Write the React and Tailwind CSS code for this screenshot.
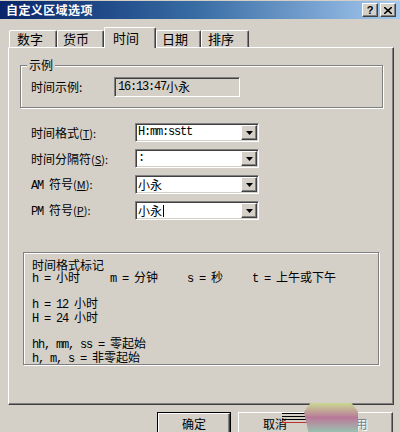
import React from 'react';

const raised =
  'border border-t-white border-l-white border-r-[#404040] border-b-[#404040] shadow-[inset_-1px_-1px_0_#808080]';
const sunken =
  'border border-t-[#808080] border-l-[#808080] border-r-white border-b-white shadow-[inset_1px_1px_0_#404040,inset_-1px_-1px_0_#d4d0c8]';
const etched = 'border border-[#808080] shadow-[inset_1px_1px_0_#fff,1px_1px_0_#fff]';

// latin runs in a narrow mono face, CJK in Noto
function T({ children }) {
  const parts = String(children).split(/([\x20-\x7e]+)/).filter(Boolean);
  return (
    <>
      {parts.map((p, i) =>
        /^[\x20-\x7e]+$/.test(p) ? (
          <span key={i} className="font-['Liberation_Mono',monospace] tracking-[-1.2px] whitespace-pre">
            {p}
          </span>
        ) : (
          <span key={i}>{p}</span>
        )
      )}
    </>
  );
}

function Arrow() {
  return (
    <svg width="7" height="4" viewBox="0 0 7 4">
      <path d="M0 0h7L3.5 4z" fill="#000" />
    </svg>
  );
}

function Combo({ value, caret }) {
  return (
    <div className={`relative w-[124px] h-[19px] bg-white flex items-center ${sunken}`}>
      <span className="pl-[2px] leading-[15px] flex items-center">
        <T>{value}</T>
        {caret && <span className="ml-[1px] w-[1px] h-[12px] bg-black" />}
      </span>
      <div className={`ml-auto mr-[1px] w-[16px] h-[15px] bg-[#d4d0c8] flex items-center justify-center ${raised}`}>
        <Arrow />
      </div>
    </div>
  );
}

function Row({ label, keyChar, pre, value, caret }) {
  return (
    <div className="flex items-center h-[19px] pl-[22px]">
      <div className="w-[104px] leading-[14px]">
        <T>{pre}</T>
        <span className="text-[11px]">(</span>
        <span className="underline text-[11px]">{keyChar}</span>
        <span className="text-[11px]">):</span>
      </div>
      <Combo value={value} caret={caret} />
    </div>
  );
}

const tabs = [
  { t: '数字', w: 'w-[48px]', pl: 'pl-[7px]' },
  { t: '货币', w: 'w-[47px]', pl: 'pl-[5px]' },
  { t: '时间', w: 'w-[52px]', pl: 'pl-[8px]', on: true },
  { t: '日期', w: 'w-[45px]', pl: 'pl-[5px]' },
  { t: '排序', w: 'w-[48px]', pl: 'pl-[6px]' },
];

export default function App() {
  return (
    <div className="relative w-[400px] h-[432px] overflow-hidden bg-[#d4d0c8] text-black text-[12px] font-['Noto_Sans_CJK_SC',sans-serif]">
      {/* title bar */}
      <div className="mt-[1px] h-[18px] flex items-center pl-[6px] pr-[4px] bg-linear-to-r from-[#0a246a] via-[#3a6ea5] to-[#a6caf0]">
        <span className="text-white font-bold text-[12px] leading-[14px] tracking-[0.4px]">自定义区域选项</span>
        <div className="ml-auto flex gap-[2px]">
          <div className={`w-[16px] h-[14px] bg-[#d4d0c8] flex items-center justify-center text-[11px] font-bold leading-none font-['Liberation_Sans',sans-serif] ${raised}`}>?</div>
          <div className={`w-[16px] h-[14px] bg-[#d4d0c8] flex items-center justify-center ${raised}`}>
            <svg width="8" height="7" viewBox="0 0 8 7">
              <path d="M0 0L8 7M8 0L0 7" stroke="#000" strokeWidth="1.6" />
            </svg>
          </div>
        </div>
      </div>

      {/* tabs */}
      <div className="mt-[8px] h-[20px] flex items-end pl-[9px] relative z-10">
        {tabs.map((tb) =>
          tb.on ? (
            <div
              key={tb.t}
              className={`${tb.w} h-[21px] -mb-[1px] bg-[#d4d0c8] rounded-t-[2px] border-t border-l border-t-white border-l-white border-r border-r-[#404040] shadow-[inset_-1px_0_0_#808080] ${tb.pl} pt-[3px] text-[13px] leading-[14px]`}
            >
              {tb.t}
            </div>
          ) : (
            <div
              key={tb.t}
              className={`${tb.w} h-[17px] rounded-t-[2px] border-t border-l border-t-white border-l-white border-r border-r-[#404040] shadow-[inset_-1px_0_0_#808080] ${tb.pl} pt-[1px] text-[13px] leading-[14px]`}
            >
              {tb.t}
            </div>
          )
        )}
      </div>

      {/* panel */}
      <div className="ml-[8px] w-[386px] h-[358px] border border-t-white border-l-white border-r-[#404040] border-b-[#404040] shadow-[inset_-1px_-1px_0_#808080]">
        {/* 示例 group */}
        <div className={`relative mt-[17px] ml-[11px] w-[363px] h-[43px] ${etched}`}>
          <span className="absolute -top-[9px] left-[6px] px-[2px] bg-[#d4d0c8] leading-[16px]">示例</span>
          <div className="flex items-center mt-[11px] pl-[10px] h-[20px]">
            <div className="w-[83px] leading-[14px]">时间示例:</div>
            <div className={`w-[126px] h-[20px] flex items-center pl-[3px] ${sunken}`}>
              <T>16:13:47小永</T>
            </div>
          </div>
        </div>

        <div className="mt-[15px] flex flex-col gap-[7px]">
          <Row pre="时间格式" keyChar="T" value="H:mm:sstt" />
          <Row pre="时间分隔符" keyChar="S" value=":" />
          <Row pre="AM 符号" keyChar="M" value="小永" />
          <Row pre="PM 符号" keyChar="P" value="小永" caret />
        </div>

        {/* format legend */}
        <div className={`mt-[32px] ml-[14px] w-[356px] h-[113px] pl-[8px] pt-[6px] leading-[12px] ${etched}`}>
          <div>时间格式标记</div>
          <div className="flex">
            <span className="w-[78px]"><T>h = 小时</T></span>
            <span className="w-[77px]"><T>m = 分钟</T></span>
            <span className="w-[65px]"><T>s = 秒</T></span>
            <span><T>t = 上午或下午</T></span>
          </div>
          <div className="h-[12px]" />
          <div><T>h = 12 小时</T></div>
          <div><T>H = 24 小时</T></div>
          <div className="h-[12px]" />
          <div><T>hh, mm, ss = 零起始</T></div>
          <div><T>h, m, s = 非零起始</T></div>
        </div>
      </div>

      {/* buttons */}
      <div className="mt-[7px] flex pl-[157px]">
        <div className="w-[74px] h-[23px] border border-black">
          <div className={`h-full flex items-center justify-center ${raised}`}>确定</div>
        </div>
        <div className={`ml-[7px] w-[74px] h-[23px] flex items-center justify-center ${raised}`}>取消</div>
        <div className={`ml-[6px] w-[75px] h-[23px] flex items-center justify-center text-[#808080] [text-shadow:1px_1px_0_#fff] ${raised}`}>
          应用
        </div>
      </div>

      {/* screen-capture smear over the buttons */}
      <div className="absolute left-[282px] top-[413px] w-[30px] flex flex-col gap-[2px]">
        <div className="h-[1px] bg-black" />
        <div className="h-[1px] bg-black" />
        <div className="h-[1px] bg-black" />
        <div className="h-[1px] bg-[#c03030]" />
      </div>
      <div className="absolute left-[304px] top-[403px] w-[54px] h-[29px] [clip-path:polygon(12%_0,88%_0,100%_30%,100%_100%,8%_100%,0_30%)] bg-linear-to-b from-[#c8d890] via-[#b87898] to-[#98c0b0]" />
    </div>
  );
}
